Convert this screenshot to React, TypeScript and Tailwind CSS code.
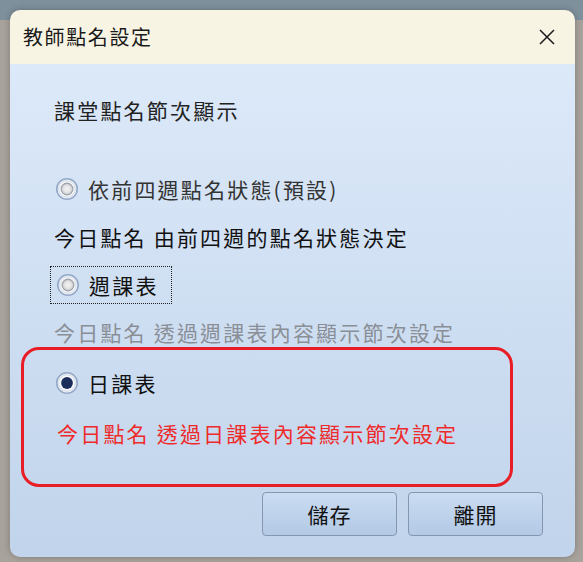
import React from "react";

function Radio({ checked }: { checked?: boolean }) {
  return (
    <svg width="24" height="24" viewBox="0 0 22 22" className="shrink-0">
      <defs>
        <radialGradient id="rgu" cx="0.5" cy="0.5" r="0.5">
          <stop offset="0" stopColor="#f2f2f2" />
          <stop offset="0.6" stopColor="#e4e4e4" />
          <stop offset="1" stopColor="#b9bcc1" />
        </radialGradient>
      </defs>
      <circle cx="11" cy="11" r="9.4" fill="#f6f8fb" stroke="#94a9c8" strokeWidth="1.5" />
      <circle cx="11" cy="11" r="7.6" fill="none" stroke="#c9d3e0" strokeWidth="0.8" />
      {checked ? (
        <circle cx="11" cy="11" r="5.4" fill="#1b2d5a" />
      ) : (
        <circle cx="11" cy="11" r="5.4" fill="url(#rgu)" stroke="#9ea3aa" strokeWidth="1" />
      )}
    </svg>
  );
}

const font = { fontFamily: '"Noto Sans CJK TC", "Noto Sans CJK SC", sans-serif' };

export default function App() {
  return (
    <div
      className="w-[583px] h-[562px] pt-[10px] pl-[10px] bg-[linear-gradient(to_bottom,#7e909c_0px,#7e909c_20px,#a8a29c_20px,#a8a29c_100%)] overflow-hidden"
      style={font}
    >
      <div className="w-[565px] h-[547px] rounded-[10px] overflow-hidden flex flex-col shadow-[0_0_6px_rgba(0,0,0,0.25)]">
        <div className="h-[54px] shrink-0 bg-[#f8f4e4] flex items-center justify-between pl-[13px] pr-[20px]">
          <span className="text-[20px] leading-[28px] tracking-[1.6px] text-[#1a1a1a]">教師點名設定</span>
          <svg width="16" height="16" viewBox="0 0 16 16">
            <path d="M1 1 L15 15 M15 1 L1 15" stroke="#1a1a1a" strokeWidth="1.5" />
          </svg>
        </div>
        <div className="flex-1 flex flex-col bg-[linear-gradient(to_bottom,#dce9f9,#c1d4eb)] text-[21px] leading-[28px] tracking-[2.2px]">
          <div className="pl-[44px] pt-[32px] text-[#222]">課堂點名節次顯示</div>
          <div className="pl-[45px] mt-[51px] flex items-center gap-[9px] text-[#333]">
            <Radio />
            <span>依前四週點名狀態(預設)</span>
          </div>
          <div className="pl-[44px] mt-[20px] text-[#111]">今日點名 由前四週的點名狀態決定</div>
          <div className="ml-[40px] mt-[15px] self-start h-[38px] flex items-center gap-[9px] pl-[5px] pr-[12px] border border-dotted border-[#222]">
            <Radio />
            <span className="text-[#111]">週課表</span>
          </div>
          <div className="pl-[44px] mt-[14px] text-[#8a8f97]">今日點名 透過週課表內容顯示節次設定</div>
          <div className="ml-[11px] mt-[1px] w-[492px] h-[140px] border-[3px] border-[#e81d25] rounded-[18px] flex flex-col pl-[31px] pt-[19px]">
            <div className="flex items-center gap-[9px] text-[#111]">
              <Radio checked />
              <span>日課表</span>
            </div>
            <div className="mt-[22px] pl-[2px] text-[#ee2a2a]">今日點名 透過日課表內容顯示節次設定</div>
          </div>
          <div className="mt-[5px] flex justify-end gap-[11px] pr-[32px]">
            <button className="w-[135px] h-[44px] rounded-[4px] border border-[#8596b0] bg-[linear-gradient(to_bottom,#cadcf2,#b3c9e5)] text-[21px] tracking-[1px] text-[#111] flex items-center justify-center">
              儲存
            </button>
            <button className="w-[135px] h-[44px] rounded-[4px] border border-[#8596b0] bg-[linear-gradient(to_bottom,#cadcf2,#b3c9e5)] text-[21px] tracking-[1px] text-[#111] flex items-center justify-center">
              離開
            </button>
          </div>
        </div>
      </div>
    </div>
  );
}
